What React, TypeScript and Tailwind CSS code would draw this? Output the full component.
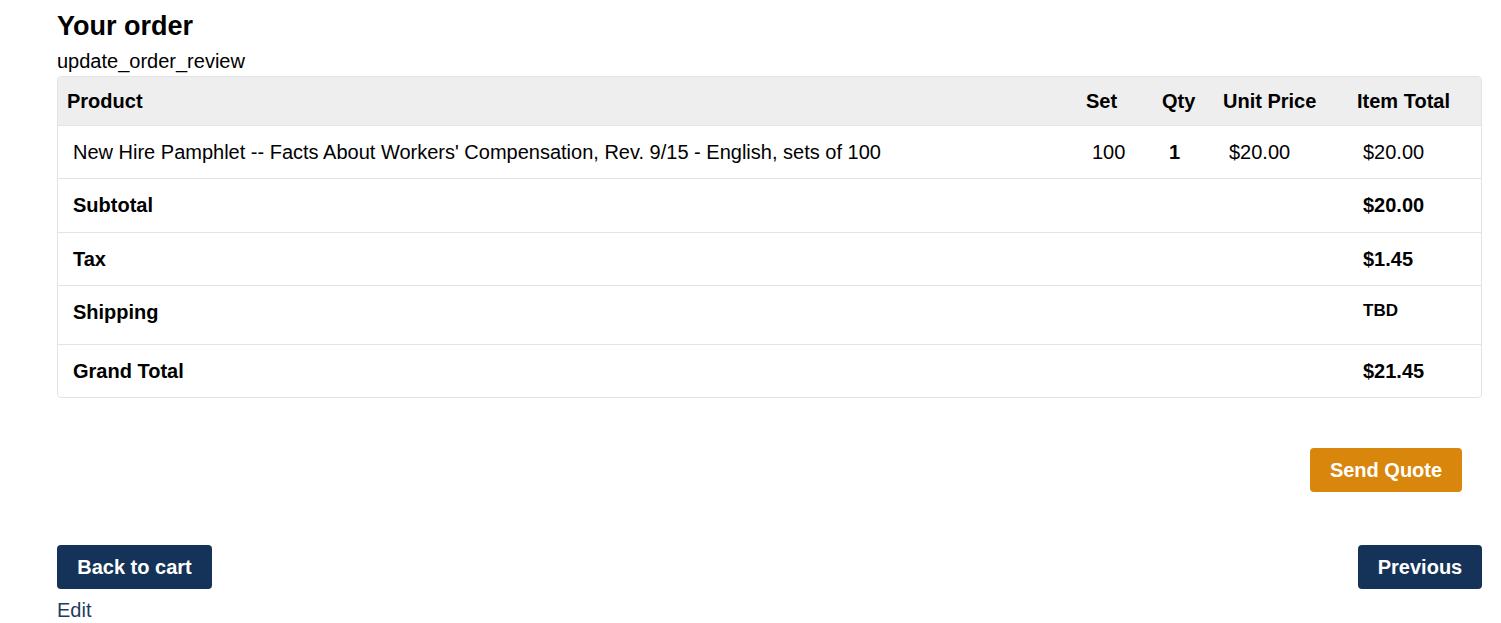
const font = { fontFamily: '"Liberation Sans", Arial, sans-serif' };

const totals = [
  { label: "Subtotal", value: "$20.00", h: "h-[54px]" },
  { label: "Tax", value: "$1.45", h: "h-[53px]" },
  { label: "Shipping", value: "TBD", h: "h-[59px]", small: true },
  { label: "Grand Total", value: "$21.45", h: "h-[53px]" },
];

export default function App() {
  return (
    <div style={font} className="w-[1501px] h-[623px] bg-white text-black pl-[57px] pr-[19px] overflow-hidden">
      <h1 className="text-[27px] font-bold leading-[28px] pt-[12px]">Your order</h1>
      <p className="text-[20px] leading-[22px] mt-[10px]">update_order_review</p>

      <div className="mt-[4px] border border-[#e3e3e3] rounded-[4px] overflow-hidden">
        <table className="w-full table-fixed border-collapse text-[20px]">
          <colgroup>
            <col />
            <col className="w-[76px]" />
            <col className="w-[61px]" />
            <col className="w-[134px]" />
            <col className="w-[133px]" />
          </colgroup>
          <thead>
            <tr className="bg-[#eeeeee] h-[48px] text-left font-bold">
              <th className="pl-[9px]">Product</th>
              <th className="pl-[9px]">Set</th>
              <th className="pl-[9px]">Qty</th>
              <th className="pl-[9px]">Unit Price</th>
              <th className="pl-[9px]">Item Total</th>
            </tr>
          </thead>
          <tbody>
            <tr className="h-[53px] border-t border-[#e3e3e3]">
              <td className="pl-[15px]">New Hire Pamphlet -- Facts About Workers' Compensation, Rev. 9/15 - English, sets of 100</td>
              <td className="pl-[15px]">100</td>
              <td className="pl-[16px] font-bold">1</td>
              <td className="pl-[15px]">$20.00</td>
              <td className="pl-[15px]">$20.00</td>
            </tr>
            {totals.map((t) => (
              <tr key={t.label} className={`${t.h} border-t border-[#e3e3e3] font-bold`}>
                <td className={t.small ? "pl-[15px] pb-[6px]" : "pl-[15px]"} colSpan={4}>{t.label}</td>
                <td className="pl-[15px]">
                  {t.small ? <span className="block text-[17px] pb-[7px]">{t.value}</span> : t.value}
                </td>
              </tr>
            ))}
          </tbody>
        </table>
      </div>

      <div className="flex justify-end mt-[50px] pr-[20px]">
        <button className="h-[44px] w-[152px] bg-[#d8860c] text-white text-[20px] font-bold rounded-[4px]">Send Quote</button>
      </div>

      <div className="flex justify-between items-start mt-[53px]">
        <div>
          <button className="h-[44px] w-[155px] bg-[#153358] text-white text-[20px] font-bold rounded-[4px]">Back to cart</button>
          <a className="block text-[20px] leading-[22px] text-[#1f3c5f] mt-[10px]">Edit</a>
        </div>
        <button className="h-[44px] w-[124px] bg-[#153358] text-white text-[20px] font-bold rounded-[4px]">Previous</button>
      </div>
    </div>
  );
}
